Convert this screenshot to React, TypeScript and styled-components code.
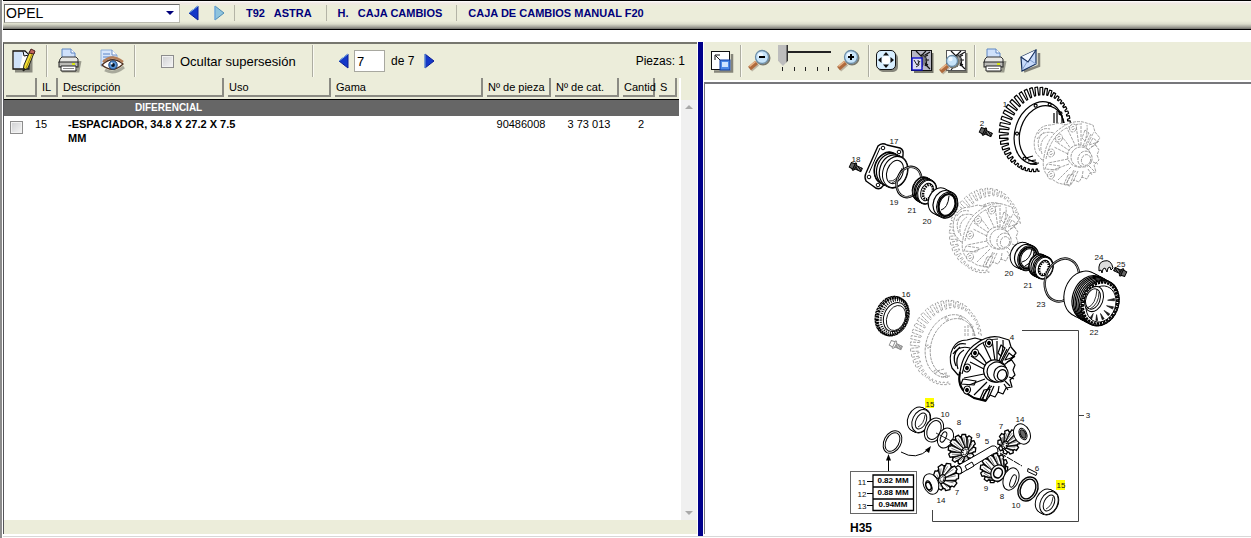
import React from "react";
import styled, { createGlobalStyle } from "styled-components";

const beige = "#ecedda";
const navy = "#00007b";

const GlobalStyle = createGlobalStyle`
  *, *::before, *::after { box-sizing: border-box; }
  body {
    margin: 0;
    background: #fff;
    color: #000;
    font-family: "Liberation Sans", Arial, sans-serif;
    font-size: 12px;
  }
  button, input, select { font: inherit; color: inherit; margin: 0; }
`;

/* ---------- page frame ---------- */

const Page = styled.div`
  min-height: 100vh;
  display: flex;
  flex-direction: column;
  border-left: 2px solid #8c8c8c;
  padding-left: 1px;
  padding-bottom: 2px;
`;

const TopBar = styled.header`
  height: 30px;
  flex: none;
  display: flex;
  align-items: center;
  margin-bottom: 12px;
  padding: 0 0 4px 1px;
  border-top: 1px solid #000;
  border-bottom: 1px solid #000;
  background: linear-gradient(#fff 0, #f0e8e4 2px, ${beige} 5px, ${beige} 20px, #dcddcc 23px, #a3a399 26px, #6f6f6a 28px);
`;

const BrandBox = styled.div`
  display: grid;
  align-items: center;
  justify-items: end;
  width: 176px;
  height: 19px;
  margin-right: 8px;
  border: 1px solid #b9b9ae;
  border-top-color: #6a6a6a;
  border-left-color: #6a6a6a;
  background: #fff;
  > * { grid-area: 1 / 1; }
  > svg { margin-right: 5px; pointer-events: none; }
`;

const BrandSelect = styled.select`
  appearance: none;
  width: 100%;
  height: 17px;
  padding: 0 0 0 1px;
  border: 0;
  background: transparent;
  font-size: 14px;
  line-height: 17px;
`;

const IconButton = styled.button<{ $w: number; $gap?: number }>`
  display: flex;
  flex: none;
  align-items: center;
  justify-content: center;
  width: ${(p) => p.$w}px;
  height: 28px;
  margin-right: ${(p) => p.$gap ?? 0}px;
  padding: 0;
  border: 0;
  background: none;
  > svg { flex: none; overflow: visible; }
`;

const Crumbs = styled.nav`
  display: flex;
  align-items: center;
`;

const Crumb = styled.a`
  padding: 0 14px 0 11px;
  border-left: 1px solid #b4b4a6;
  color: ${navy};
  font-size: 11px;
  font-weight: bold;
  line-height: 16px;
  text-decoration: none;
  white-space: pre;
`;

const Split = styled.main`
  flex: 1;
  display: grid;
  grid-template-columns: 695fr 5px 548fr;
  border-bottom: 1px solid #d8d8d8;
`;

const Divider = styled.div`
  background: #00008b;
`;

/* ---------- parts list ---------- */

const ListPane = styled.section`
  display: flex;
  flex-direction: column;
  min-width: 0;
  margin: 0 1px 2px 0;
  border-top: 2px solid #77776f;
  border-left: 1px solid #55555a;
  background: ${beige};
`;

const Toolbar = styled.div<{ $height: number; $pad: number }>`
  display: flex;
  flex: none;
  align-items: center;
  height: ${(p) => p.$height}px;
  padding-left: ${(p) => p.$pad}px;
`;

const Sep = styled.span<{ $gap: number }>`
  flex: none;
  width: 2px;
  height: 32px;
  margin-right: ${(p) => p.$gap}px;
  border-left: 1px solid #adada1;
  border-right: 1px solid #fafaf2;
`;

const Tick = styled.input`
  appearance: none;
  flex: none;
  width: 13px;
  height: 13px;
  border: 1px solid #8d8d8d;
  background: linear-gradient(135deg, #cfd0d2, #f6f6f6);
  box-shadow: inset 0 0 0 1px #f2f2f2;
`;

const TickLabel = styled.label`
  display: flex;
  align-items: center;
  gap: 6px;
  width: 151px;
  font-size: 13px;
  white-space: nowrap;
`;

const PageInput = styled.input`
  width: 31px;
  height: 22px;
  padding: 0 2px;
  border: 1px solid #a8a8a0;
  background: #fff;
  font-size: 13px;
`;

const PageCount = styled.span`
  width: 33px;
  padding-left: 6px;
  white-space: nowrap;
`;

const Pieces = styled.span`
  margin-left: auto;
  padding-right: 12px;
`;

const ListBody = styled.div`
  flex: 1;
  display: grid;
  grid-template-columns: minmax(0, 1fr) 16px;
  margin-bottom: 14px;
`;

const TableArea = styled.div`
  padding-right: 2px;
  background: #fff;
`;

const PartsTable = styled.table`
  width: 100%;
  table-layout: fixed;
  border-collapse: collapse;
  font-size: 11px;
  line-height: 14px;
`;

const HeadCell = styled.th`
  padding: 0 2px 2px;
  border-bottom: 1px solid #000;
  background: ${beige};
  font-weight: normal;
  text-align: left;
`;

const HeadBox = styled.div`
  height: 19px;
  padding: 2px 0 0 1px;
  border-right: 2px solid #8b8b83;
  border-bottom: 2px solid #8b8b83;
  white-space: nowrap;
`;

const GroupCell = styled.th`
  height: 16px;
  padding: 0 0 0 131px;
  background: #666;
  color: #fff;
  font-size: 10px;
  text-align: left;
`;

const Cell = styled.td<{ $center?: boolean; $bold?: boolean; $pad?: number }>`
  padding: 1px 0 0 ${(p) => p.$pad ?? 4}px;
  font-weight: ${(p) => (p.$bold ? "bold" : "normal")};
  text-align: ${(p) => (p.$center ? "center" : "left")};
  vertical-align: top;
  white-space: nowrap;
  > input { display: block; margin-top: 4px; }
`;

const ScrollTrack = styled.div`
  display: flex;
  flex-direction: column;
  justify-content: space-between;
  align-items: center;
  margin-top: 22px;
  padding: 5px 0;
  background: #f0f0f0;
`;

/* ---------- picture pane ---------- */

const PicturePane = styled.section`
  display: flex;
  flex-direction: column;
  min-width: 0;
  padding-bottom: 2px;
`;

const PictureTools = styled(Toolbar)`
  background: ${beige};
  margin-left: 1px;
`;

const Canvas = styled.div`
  flex: 1;
  margin: 2px 0 0 1px;
  border-top: 2px solid #77777b;
  border-left: 1px solid #77777b;
  > svg { display: block; margin: 0 auto; }
`;

const ZoomSlider = styled.div`
  width: 54px;
  height: 32px;
  margin-right: 5px;
`;

const Range = styled.input`
  appearance: none;
  display: block;
  width: 100%;
  height: 21px;
  background: linear-gradient(#222, #222) 0 6px / 53px 2px no-repeat;
  &::-webkit-slider-thumb {
    appearance: none;
    width: 10px;
    height: 21px;
    background: linear-gradient(90deg, #bdbdbd 8px, #333 9px);
    clip-path: polygon(0 0, 100% 0, 100% 75%, 50% 100%, 0 75%);
  }
`;

const Ticks = styled.div`
  display: flex;
  justify-content: space-between;
  padding: 1px 3px 0 4px;
  > i { width: 1px; height: 4px; background: #222; }
`;

/* ---------- icons ---------- */

const Arrow = ({ left, pale }: { left?: boolean; pale?: boolean }) => (
  <svg width="11" height="16" viewBox="0 0 11 16">
    <path
      d={left ? "M10 1V15L1 8Z" : "M1 1V15L10 8Z"}
      fill={pale ? "#8fc4dd" : "#1438c8"}
      stroke={pale ? "#4f8cb4" : "#0a1c96"}
    />
    <path d={left ? "M10 1L1 8" : "M1 1V15"} stroke="#7db4ec" fill="none" />
  </svg>
);

const Caret = ({ up, color, w = 8 }: { up?: boolean; color: string; w?: number }) => (
  <svg width={w} height="4" viewBox="0 0 8 4" aria-hidden="true">
    <path d={up ? "M0 4L4 0L8 4Z" : "M0 0H8L4 4Z"} fill={color} />
  </svg>
);

const EditIcon = () => (
  <svg width="26" height="26" viewBox="0 0 26 26">
    <path d="M4 23H20V8" stroke="#8b8b80" strokeWidth="3" fill="none" />
    <path d="M2 3H14L18 7V21H2Z" fill="#fff" stroke="#111" strokeWidth="1.3" />
    <path d="M3 4H12L9 20H3Z" fill="#cfe2fa" />
    <path d="M12 3L13 8L18 7" fill="#e9f2ff" stroke="#111" />
    <path d="M19 3L23 5L17 20L12 23L13 17Z" fill="#f3df38" stroke="#222" />
    <path d="M21 6L15 20" stroke="#a58b10" />
    <path d="M18 5L20 1L24 3L23 6Z" fill="#c0645c" stroke="#4a2020" />
    <path d="M12 23L13 20L15 21Z" fill="#111" />
  </svg>
);

const PrinterIcon = () => (
  <svg width="24" height="26" viewBox="0 0 24 26">
    <path d="M4 23H20L22 13" stroke="#77776c" strokeWidth="3" fill="none" opacity=".7" />
    <path d="M4 11V1H13L17 5V11Z" fill="#cfe1fb" stroke="#5f86c2" />
    <path d="M13 1V5H17" fill="#fff" stroke="#5f86c2" />
    <path d="M2 11L4 9H18L20 11V15H1Z" fill="#e8e8e4" stroke="#333" />
    <rect x="1" y="14" width="19" height="5" fill="#bcbcb8" stroke="#222" />
    <rect x="14" y="15" width="3" height="2" fill="#d8e815" />
    <path d="M3 18H18V23H3Z" fill="#fff" stroke="#222" />
    <path d="M5 20.500H16" stroke="#888" />
  </svg>
);

const PreviewIcon = () => (
  <svg width="27" height="26" viewBox="0 0 27 26">
    <path d="M2 2H13L18 7V18H2Z" fill="#d7e6fb" stroke="#8eaeda" />
    <path d="M13 2V7H18" fill="#fff" stroke="#6d8fc4" />
    <path d="M4 6H11M4 9H15M4 12H13" stroke="#5a84c6" />
    <path d="M6 22Q15 27 25 19" stroke="#8b8b80" strokeWidth="3" fill="none" opacity=".7" />
    <path d="M3 17Q13 7 24 16Q14 26 3 17Z" fill="#fff" stroke="#4d3020" strokeWidth="1.300" />
    <path d="M4 14Q13 5 24 14" stroke="#b57f58" strokeWidth="2.400" fill="none" />
    <circle cx="14" cy="17" r="4.200" fill="#5b97d8" stroke="#163b70" />
    <circle cx="14" cy="17" r="1.900" fill="#051428" />
    <circle cx="12.700" cy="15.500" r="1" fill="#fff" />
  </svg>
);

const DockIcon = () => (
  <svg width="24" height="24" viewBox="0 0 24 24">
    <path d="M4 22.500H22V5" stroke="#85857a" strokeWidth="2.500" fill="none" />
    <rect x="1.500" y="2.500" width="18" height="18" fill="#fff" stroke="#111" />
    <path d="M5 11V6H10M5.500 6.500L10 11" stroke="#111" fill="none" />
    <rect x="10" y="11" width="10" height="10" fill="#4d8ae8" stroke="#0d3ba0" />
    <rect x="12" y="13" width="6" height="5" fill="#cfe4ff" />
  </svg>
);

const Lens = ({ x, y, r }: { x: number; y: number; r: number }) => (
  <>
    <path d={`M${x - r + 2} ${y + r}L${x - r - 5} ${y + r + 6}`} stroke="#8c7a68" strokeWidth="5" opacity=".5" />
    <path d={`M${x - r + 1} ${y + r - 1}L${x - r - 6} ${y + r + 5}`} stroke="#b06a3c" strokeWidth="4.500" />
    <path d={`M${x - r} ${y + r - 2}L${x - r - 6} ${y + r + 3}`} stroke="#eab68a" strokeWidth="1.600" />
    <circle cx={x + 1} cy={y + 1} r={r} fill="none" stroke="#78786e" strokeWidth="2" />
    <circle cx={x} cy={y} r={r} fill="#c7e4fa" stroke="#6d8ea8" strokeWidth="1.300" />
    <circle cx={x - 1.500} cy={y - 2} r={r / 2.500} fill="#eef8ff" />
  </>
);

const ZoomIcon = ({ plus }: { plus?: boolean }) => (
  <svg width="24" height="24" viewBox="0 0 24 24">
    <Lens x={14} y={8} r={6.5} />
    <path d={plus ? "M11 8H17M14 5V11" : "M11 8H17"} stroke="#000" strokeWidth="2" />
  </svg>
);

const PanIcon = () => (
  <svg width="24" height="24" viewBox="0 0 24 24">
    <rect x="3" y="4" width="20" height="19" rx="5" fill="#85857a" />
    <rect x="1.500" y="1.500" width="19" height="19" rx="4.500" fill="#d8efff" stroke="#111" />
    <path d="M11 3L14 6.500H8ZM11 19L14 15.500H8ZM3 11L6.500 8V14ZM19 11L15.500 8V14Z" fill="#111" />
    <circle cx="11" cy="11" r="4" fill="#fff" />
  </svg>
);

const Sketch = () => (
  <>
    <path d="M6 2L11 7L16 2M6 21L10 16M20 20L15 15M15 6L20 3M13 6Q19 10 15 17M12 5V18M14 8L18 6M15 11H19M15 14L18 16" stroke="#111" strokeWidth="1.200" fill="none" />
    <path d="M10 8L15 5L17 12L13 17Z" fill="#555" opacity=".6" />
  </>
);

const RegionIcon = () => (
  <svg width="24" height="24" viewBox="0 0 24 24">
    <path d="M4 23H22.500V4" stroke="#77776c" strokeWidth="2" fill="none" />
    <rect x="1.500" y="1.500" width="20" height="20" fill="#b7b7c4" stroke="#111" />
    <Sketch />
    <rect x="2" y="9" width="10" height="12" fill="#dcdcf4" stroke="#1010c8" strokeWidth="1.400" />
    <path d="M4 11L7 16L10 12M6 18L9 16L8 11" stroke="#222" fill="none" />
  </svg>
);

const FindIcon = () => (
  <svg width="27" height="24" viewBox="0 0 27 24">
    <path d="M7 23H25.500V4" stroke="#77776c" strokeWidth="2" fill="none" />
    <rect x="5.500" y="1.500" width="19" height="20" fill="#fff" stroke="#555" />
    <g transform="translate(4 0)"><Sketch /></g>
    <Lens x={11} y={12} r={5.5} />
  </svg>
);

const MailIcon = () => (
  <svg width="20" height="24" viewBox="0 0 20 24">
    <path d="M4 22.500L19 17V4" stroke="#85857a" strokeWidth="2.500" fill="none" />
    <path d="M1 8L16 1V15L2 22Z" fill="#c6dafa" stroke="#16305e" strokeWidth="1.200" />
    <path d="M1 8L8 13L16 1" fill="#f4f9ff" stroke="#16305e" strokeWidth="1.200" />
    <path d="M2 21L7 13M16 15L10 11" stroke="#7f9ccc" />
  </svg>
);

/* ---------- exploded drawing ---------- */

type Oval = { cx: number; cy: number; rx: number; ry: number; rot?: number };

const at = (o: Oval, t: number, k = 0): [number, number] => {
  const a = ((o.rot ?? 20) * Math.PI) / 180;
  const x = (o.rx + k) * Math.cos(t);
  const y = (o.ry + k) * Math.sin(t);
  return [o.cx + x * Math.cos(a) - y * Math.sin(a), o.cy + x * Math.sin(a) + y * Math.cos(a)];
};

const pt = (p: [number, number]) => `${p[0].toFixed(1)} ${p[1].toFixed(1)}`;

const El = ({ cx, cy, rx, ry, rot = 20, ...rest }: Oval & React.SVGProps<SVGEllipseElement>) => (
  <ellipse cx={cx} cy={cy} rx={rx} ry={ry} transform={`rotate(${rot} ${cx} ${cy})`} {...rest} />
);

const teethPath = (o: Oval, n: number, base: number, extra: number, t0: number) => {
  const step = (Math.PI * 2) / n;
  let d = "";
  for (let i = 0; i < n; i++) {
    const t = i * step;
    const len = base + extra * Math.max(0, Math.cos(t - t0));
    d += `${i ? "L" : "M"}${pt(at(o, t))}L${pt(at(o, t + step * 0.1, len))}L${pt(at(o, t + step * 0.6, len))}L${pt(at(o, t + step * 0.7))}`;
  }
  return d + "Z";
};

const ghostInk = "#8c8c8c";

const RingGear = ({ x, y, ghost }: { x: number; y: number; ghost?: boolean }) => {
  const face: Oval = { cx: 1038, cy: 131, rx: 29, ry: 38, rot: 18 };
  return (
    <g
      transform={`translate(${x} ${y})`}
      fill="none"
      stroke={ghost ? ghostInk : "#000"}
      strokeWidth={ghost ? 0.8 : 1.2}
      strokeDasharray={ghost ? "3 1" : undefined}
      strokeLinejoin="round"
    >
      <path d={teethPath(face, 46, 2.5, 8, Math.PI * 1.1)} fill="#fff" />
      <El cx={1039} cy={132} rx={24} ry={32} rot={18} />
      <El cx={1042} cy={133} rx={22} ry={29} rot={18} />
      {[5.3, 4.7, 4.1, 2.9, 1.9].map((t) => {
        const p = at({ cx: 1040.5, cy: 132.5, rx: 23, ry: 30.5, rot: 18 }, t);
        return <circle key={t} cx={p[0]} cy={p[1]} r="1.500" />;
      })}
      <path d="M1074 122H1048V150L1034 154L1041 174L1080 185Z" fill="#fff" stroke="none" />
      <path d="M1054 122V112M1057 122V110M1062 122V114M1033 155L1026 157M1036 159L1028 160M1039 162L1030 163" />
    </g>
  );
};

const Housing = ({ x, y, ghost }: { x: number; y: number; ghost?: boolean }) => (
  <g
    transform={`translate(${x} ${y})`}
    fill="#fff"
    stroke={ghost ? ghostInk : "#000"}
    strokeWidth={ghost ? 0.8 : 1.2}
    strokeDasharray={ghost ? "3 1" : undefined}
    strokeLinejoin="round"
  >
    <path d="M958 375L952 368Q948 357 953 348Q957 340 967 340L975 338L990 342L970 372Z" />
    <path d="M954 349Q958 342 966 344M953 354Q959 345 970 348M956 366Q951 355 960 347M958 369Q954 356 964 350" fill="none" />
    <path d="M960 372Q963 352 977 343Q988 335 999 337L1009 340L1011 347L1016 353L1011 359L1015 365L1013 370L1015 375L1010 380L1012 387L1006 388L1003 394L998 392L995 397L990 395L986 401L974 398L966 393Q957 386 960 372Z" />
    <path d="M962 374Q966 354 979 345Q988 339 998 339" fill="none" />
    <g fill="none">
      <path d="M988 366Q982 356 978 352M992 362L983 343M995 361L992 340M999 361Q1004 350 1003 340M1002 362Q1007 352 1010 347M1004 365L1015 356M984 369L970 362M984 374L964 378M985 379L969 385M987 382L974 395M990 385L982 399M994 386L989 397M999 386L998 393M1004 384L1008 390M1009 377L1014 379" />
      <path d="M986 366L971 356M997 360L997 341M1007 349L1001 361M992 386Q984 391 983 399M1007 362L1012 360M1005 381L1010 386" />
      <path d="M976 381L963 379L961 384L974 385ZM984 390L980 399L986 400L990 389Z" />
      <path d="M1001 345L998 353L1001 356L1005 348ZM1009 353L1005 360L1014 357Z" />
    </g>
    {!ghost && <path d="M960 372Q957 386 966 393L974 398L986 401" fill="none" strokeWidth="2" />}
    {[[989, 343], [975, 353], [967, 368], [967, 390]].map(([cx, cy]) => (
      <g key={cy}>
        <El cx={cx} cy={cy} rx={3.4} ry={4} />
        <El cx={cx} cy={cy} rx={1.3} ry={1.6} fill={ghost ? "#fff" : "#000"} />
      </g>
    ))}
    <El cx={995} cy={371} rx={11.5} ry={11} />
    <El cx={997} cy={372} rx={10} ry={10} />
    <El cx={1001} cy={374} rx={7} ry={8} />
    <El cx={1002} cy={375} rx={4.5} ry={5.5} />
  </g>
);

/* A short tube swept from the back rim (offset dx, dy) to the front rim. */
const Tube = ({ dx, dy, inner, bands = [], ...front }: Oval & { dx: number; dy: number; inner: number; bands?: number[] }) => {
  const steps = [0, 0.2, 0.4, 0.6, 0.8, 1];
  const moved = (s: number): Oval => ({ ...front, cx: front.cx + dx * (1 - s), cy: front.cy + dy * (1 - s) });
  return (
    <g>
      {steps.map((s) => <El key={s} {...moved(s)} stroke="#000" strokeWidth={2} fill="none" />)}
      {steps.map((s) => <El key={s} {...moved(s)} fill="#fff" />)}
      {bands.map((s) => <El key={s} {...moved(s)} fill="#fff" stroke="#000" strokeWidth={1.2} />)}
      <El {...front} fill="#fff" stroke="#000" strokeWidth={1} />
      <El {...front} rx={front.rx - inner} ry={front.ry - inner} fill="#fff" stroke="#000" strokeWidth={1} />
    </g>
  );
};

const Spacer = ({ cx, cy }: { cx: number; cy: number }) => (
  <g>
    <Tube cx={cx} cy={cy} rx={8.5} ry={12} rot={25} dx={-4} dy={-2} inner={3.5} />
    <path d={`M${cx - 3} ${cy + 6}Q${cx + 3} ${cy + 3} ${cx + 4} ${cy - 6}`} fill="none" stroke="#000" strokeWidth=".8" />
  </g>
);

const Washer = ({ hole, hx = 0, hy = 0, thick = 1, ...o }: Oval & { hole: number; hx?: number; hy?: number; thick?: number }) => (
  <g fill="#fff" stroke="#000" strokeWidth={thick}>
    <El {...o} />
    <El {...o} cx={o.cx + hx} cy={o.cy + hy} rx={o.rx - hole} ry={o.ry - hole} />
  </g>
);

const Bolt = ({ x, y, flip, ghost }: { x: number; y: number; flip?: boolean; ghost?: boolean }) => (
  <g transform={`translate(${x} ${y}) rotate(${flip ? 205 : 25})`} stroke={ghost ? ghostInk : "#000"} fill="#fff" strokeWidth=".9">
    <rect x="2" y="-1.800" width="7.500" height="3.600" />
    <path d="M4 -2V2M5.500 -2V2M7 -2V2M8.500 -2V2" strokeWidth="1.100" />
    <ellipse cx="1.500" cy="0" rx="1.600" ry="4" fill={ghost ? "#fff" : "#444"} />
    <path d="M-3 -2.500L1 -3V3L-3 2.500Z" fill={ghost ? "#fff" : "#666"} />
  </g>
);

/* Conical gear: wedge teeth between the rim and an off-centre hub. */
const BevelGear = ({ cx, cy, r, hx, hy, n = 11, open }: { cx: number; cy: number; r: number; hx: number; hy: number; n?: number; open?: boolean }) => {
  const rim: Oval = { cx, cy, rx: r - 2.5, ry: r - 1, rot: 25 };
  const hub: Oval = { cx: cx + hx, cy: cy + hy, rx: r * (open ? 0.5 : 0.25), ry: r * (open ? 0.6 : 0.35), rot: 25 };
  return (
    <g fill="#fff" stroke="#000" strokeWidth=".8" strokeLinejoin="round">
      <path d={teethPath(rim, n, 2, 0, 0)} strokeWidth="1.300" />
      {Array.from({ length: n }, (_, i) => {
        const t = (i * Math.PI * 2) / n;
        return (
          <g key={i}>
            <path d={`M${pt(at(rim, t - 0.12))}L${pt(at(hub, t))}L${pt(at(rim, t))}Z`} fill="#000" />
            <path d={`M${pt(at(rim, t + 0.2, -1))}L${pt(at(hub, t + 0.1))}`} strokeWidth=".5" />
          </g>
        );
      })}
      <El {...hub} strokeWidth={1.2} />
      <El {...hub} rx={hub.rx * 0.6} ry={hub.ry * 0.6} strokeWidth={1.6} strokeDasharray={open ? undefined : "1 1"} />
    </g>
  );
};

const helical: Oval = { cx: 893, cy: 316.5, rx: 14, ry: 18.5, rot: 22 };
const drum: Oval = { cx: 1100, cy: 303, rx: 17, ry: 21.5, rot: 20 };

const labels: [string, number, number][] = [
  ["1", 1005, 107], ["2", 982, 126], ["17", 894, 144], ["18", 856, 162], ["19", 894, 205],
  ["21", 912, 213], ["20", 927, 224], ["20", 1009, 276], ["21", 1028, 288], ["23", 1041, 307],
  ["24", 1099, 260], ["25", 1121, 267], ["22", 1094, 335], ["16", 906, 297], ["4", 1012, 340],
  ["3", 1088, 418], ["15", 930, 407], ["10", 945, 417], ["8", 959, 425], ["9", 978, 438],
  ["5", 987, 444], ["7", 1001, 429], ["14", 1020, 422], ["6", 1037, 471], ["15", 1061, 488],
  ["9", 986, 491], ["8", 1002, 499], ["10", 1016, 508], ["7", 957, 495], ["14", 941, 503],
  ["11", 862, 485], ["12", 862, 497], ["13", 862, 509],
];

const Drawing = () => (
  <svg width="301" height="450" viewBox="828 84 301 450" role="img" aria-label="Diferencial" fontFamily="'Liberation Sans', Arial, sans-serif">
    <RingGear x={0} y={1} />
    <Housing x={84} y={-215} ghost />
    <Bolt x={983} y={131} />

    <RingGear x={-50} y={102} ghost />
    <Housing x={3} y={-133} ghost />
    <RingGear x={-89} y={214} ghost />
    <Housing x={0} y={0} />
    <Bolt x={893} y={344} ghost />

    <g fill="#fff" stroke="#000" strokeLinejoin="round">
      <path d="M866 173L878 146Q882 142 887 145L900 148Q904 150 903 155L902 165L881 188Q877 190 873 186L866 181Q864 177 866 173Z" strokeWidth="1.400" />
      <path d="M869 173L880 148" />
      <circle cx="883" cy="148" r="1.800" />
      <circle cx="899" cy="152" r="1.800" />
      <circle cx="869" cy="177" r="1.800" />
      <circle cx="878" cy="185" r="1.800" />
    </g>
    <Tube cx={895} cy={172} rx={12} ry={16} dx={-8} dy={-4} inner={4} bands={[0, 0.25, 0.6]} />
    <path d="M889 181Q897 182 901 170M892 183Q900 180 902 168" fill="none" stroke="#000" strokeWidth=".8" />
    <Bolt x={853} y={166} />
    <El cx={909} cy={182} rx={12} ry={15.5} fill="none" stroke="#000" strokeWidth="2.400" />
    <El cx={909} cy={182} rx={12} ry={15.5} fill="none" stroke="#fff" strokeWidth=".6" />
    <Tube cx={927} cy={192} rx={9} ry={12} dx={-5} dy={-3} inner={3} bands={[0, 0.3, 0.5, 0.8]} />
    <El cx={928} cy={192} rx={4.5} ry={7.5} fill="none" stroke="#000" strokeWidth="2.500" strokeDasharray="1.500 1" />
    <Tube cx={947} cy={205} rx={10} ry={13} dx={-8} dy={-4} inner={2.5} bands={[0.55]} />
    <El cx={947} cy={205} rx={8.5} ry={11.5} fill="none" stroke="#000" strokeWidth="1.800" />
    <path d="M941 210Q948 208 949 196" stroke="#000" fill="none" />

    <Tube cx={1028} cy={258} rx={10} ry={12.5} dx={-7} dy={-3} inner={3} bands={[0.55]} />
    <El cx={1028} cy={258} rx={8.5} ry={11} fill="none" stroke="#000" strokeWidth="1.800" />
    <path d="M1022 262Q1030 260 1032 249M1025 266Q1033 262 1034 252" stroke="#000" fill="none" />
    <Tube cx={1044} cy={268} rx={8.5} ry={11} dx={-6} dy={-3} inner={3} bands={[0, 0.3, 0.6, 0.8]} />
    <El cx={1044} cy={268} rx={4.5} ry={7} fill="none" stroke="#000" strokeWidth="2.500" strokeDasharray="1.500 1" />
    <El cx={1062} cy={280} rx={16.5} ry={22} fill="none" stroke="#000" strokeWidth="2.400" />
    <El cx={1062} cy={280} rx={16.5} ry={22} fill="none" stroke="#fff" strokeWidth=".6" />

    <Tube {...drum} rx={18} ry={23} dx={-17} dy={-9} inner={2} bands={[0.45, 0.54, 0.63, 0.72, 0.81, 0.9]} />
    <path d={teethPath({ ...drum, rx: 16, ry: 20.5 }, 34, 2.5, 0, 0)} fill="#fff" stroke="#000" strokeWidth="1.300" />
    <El cx={1101} cy={304} rx={14.5} ry={18.5} fill="#fff" stroke="#000" strokeWidth=".9" />
    {[0, 0.45, 0.9, 1.35, 1.8, 5.8].map((t) => (
      <path
        key={t}
        d={`M${pt(at({ ...drum, rx: 14, ry: 18 }, t - 0.06))}L${pt(at({ ...drum, cx: 1099, rx: 8, ry: 12 }, t))}L${pt(at({ ...drum, rx: 14, ry: 18 }, t + 0.08))}Z`}
        fill="#222"
        stroke="#000"
        strokeWidth=".6"
      />
    ))}
    <El cx={1094} cy={299} rx={9} ry={13} fill="#fff" stroke="#000" />
    <El cx={1093} cy={299} rx={7} ry={10.5} fill="#fff" stroke="#000" />
    <path d="M1087 308Q1096 305 1097 289M1090 309Q1099 304 1099 292" stroke="#000" fill="none" strokeWidth=".8" />

    <path d="M1099 271Q1098 262 1104 261Q1111 259 1113 268L1111 270L1110 267L1108 268L1107 272L1105 268L1103 269L1102 273L1101 270Z" fill="#ddd" stroke="#000" />
    <Bolt x={1123} y={273} flip />

    <path d={teethPath(helical, 40, 1.5, 2, Math.PI)} fill="#fff" stroke="#000" strokeWidth="1.100" />
    <El {...helical} cx={894} rx={12.5} ry={17} fill="#fff" stroke="#000" strokeWidth="2.400" strokeDasharray="1 1.200" />
    <El {...helical} cx={895} cy={317} rx={11} ry={15} fill="#fff" stroke="#000" />
    <El {...helical} cx={896} cy={318} rx={9} ry={13} fill="#fff" stroke="#000" strokeWidth=".8" />

    <path d="M1022 330.500H1078.500V521.500H932.500V510M1078.500 415.500H1084" fill="none" stroke="#444" />

    <Spacer cx={921} cy={421} />
    <Washer cx={934} cy={430} rx={9} ry={12.5} rot={25} hole={2.5} />
    <Washer cx={945.5} cy={438} rx={7.5} ry={10.5} rot={25} hole={5} hx={-2} hy={-1} />
    <path d="M936 433L953 442" stroke="#000" strokeWidth=".8" />
    <BevelGear cx={962} cy={449} r={14} hx={3} hy={3} n={12} />
    <BevelGear cx={994} cy={468} r={14} hx={4} hy={5} n={12} open />
    <path d="M957 466L992 446Q998 445 998 452L993 454L960 474Z" fill="#fff" stroke="#000" />
    <path d="M965 466L972 462L974 466L967 470Z" fill="#fff" stroke="#000" />
    <El cx={958.5} cy={470} rx={3} ry={4} rot={-20} fill="#fff" stroke="#000" />
    <path d="M1000 453L1022 466" stroke="#000" strokeDasharray="7 1" />
    <BevelGear cx={1009} cy={442} r={11.5} hx={-4} hy={3} n={10} />
    <Washer cx={1022} cy={434} rx={8} ry={10.5} rot={-25} hole={4.5} hx={1} />
    <El cx={1023} cy={434} rx={2.5} ry={4.5} rot={-25} fill="#666" stroke="#000" />
    <BevelGear cx={946} cy={477} r={13} hx={-4} hy={2} n={9} />
    <Washer cx={931} cy={484} rx={7.5} ry={10.5} rot={-20} hole={5} hx={-2} hy={2} />
    <El cx={928.5} cy={486} rx={2.5} ry={4} rot={-20} fill="#fff" stroke="#000" strokeWidth="1.500" />
    <Washer cx={1011} cy={479} rx={7.5} ry={11.5} hole={5} hx={2} hy={2} />
    <Washer cx={1028} cy={489} rx={9.5} ry={12.5} rot={25} hole={2.2} thick={1.4} />
    <Spacer cx={1049} cy={503} />
    <path d="M1028 468.500L1037 473L1036 475.500L1027.500 471.500Z" fill="#fff" stroke="#000" />

    <Washer cx={892.5} cy={442} rx={8.5} ry={12} rot={28} hole={2} />
    <path d="M901 452Q916 461 929 449" fill="none" stroke="#000" />
    <path d="M931 446L925 450L929 453Z" />
    <path d="M888.500 472V458" stroke="#000" />
    <path d="M888.500 454L886 460.500H891Z" />

    <rect x="850.500" y="471.500" width="66" height="42" fill="#fff" stroke="#666" />
    <path d="M873 475H913.500V510.500H873ZM873 487H913M873 499H913" fill="none" stroke="#000" strokeWidth="1.300" />
    <path d="M867 481.500H873M867 493.500H873M867 505.500H873" stroke="#000" />

    <rect x="925" y="398" width="9" height="10" fill="#ff0" />
    <rect x="1056" y="480" width="9" height="10" fill="#ff0" />

    <g fontSize="8" textAnchor="middle" fill="#111">
      {labels.map(([n, x, y]) => <text key={`${n}-${x}`} x={x} y={y}>{n}</text>)}
    </g>
    <g fontSize="8" fontWeight="bold" textAnchor="middle">
      <text x="893" y="483">0.82 MM</text>
      <text x="893" y="495">0.88 MM</text>
      <text x="893" y="507">0.94MM</text>
    </g>
    <text x="850" y="532" fontSize="12" fontWeight="bold">H35</text>
  </svg>
);

/* ---------- data ---------- */

const crumbs = ["T92   ASTRA", "H.   CAJA CAMBIOS", "CAJA DE CAMBIOS MANUAL F20"];
const columns = ["", "IL", "Descripción", "Uso", "Gama", "Nº de pieza", "Nº de cat.", "Cantid", "S"];
const columnWidths = [27, 8, 21, 166, 107, 0, 68, 68, 36, 22];

export default function App() {
  return (
    <Page>
      <GlobalStyle />
      <TopBar>
        <BrandBox>
          <BrandSelect aria-label="Marca" defaultValue="OPEL">
            <option>OPEL</option>
          </BrandSelect>
          <Caret color={navy} />
        </BrandBox>
        <IconButton $w={11} $gap={15} aria-label="Anterior"><Arrow left /></IconButton>
        <IconButton $w={11} $gap={9} aria-label="Siguiente"><Arrow pale /></IconButton>
        <Crumbs>
          {crumbs.map((c) => <Crumb key={c} href="#">{c}</Crumb>)}
        </Crumbs>
      </TopBar>

      <Split>
        <ListPane>
          <Toolbar $height={34} $pad={7}>
            <IconButton $w={26} $gap={9} aria-label="Editar"><EditIcon /></IconButton>
            <Sep $gap={10} />
            <IconButton $w={24} $gap={17} aria-label="Imprimir"><PrinterIcon /></IconButton>
            <IconButton $w={27} $gap={8} aria-label="Vista previa"><PreviewIcon /></IconButton>
            <Sep $gap={25} />
            <TickLabel>
              <Tick type="checkbox" />
              Ocultar supersesión
            </TickLabel>
            <Sep $gap={24} />
            <IconButton $w={11} $gap={5} aria-label="Página anterior"><Arrow left /></IconButton>
            <PageInput aria-label="Página" defaultValue="7" />
            <PageCount>de 7</PageCount>
            <IconButton $w={22} aria-label="Página siguiente"><Arrow /></IconButton>
            <Pieces>Piezas: 1</Pieces>
          </Toolbar>
          <ListBody>
            <TableArea>
              <PartsTable>
                <colgroup>
                  {columnWidths.map((w, i) => <col key={i} width={w || undefined} />)}
                </colgroup>
                <thead>
                  <tr>
                    {columns.map((c, i) => (
                      <HeadCell key={i} colSpan={i === 0 ? 2 : 1}><HeadBox>{c}</HeadBox></HeadCell>
                    ))}
                  </tr>
                </thead>
                <tbody>
                  <tr><GroupCell colSpan={10}>DIFERENCIAL</GroupCell></tr>
                  <tr>
                    <Cell $pad={6}><Tick type="checkbox" aria-label="Seleccionar pieza 15" /></Cell>
                    <Cell colSpan={2}>15</Cell>
                    <Cell $bold $pad={8}>-ESPACIADOR, 34.8 X 27.2 X 7.5<br />MM</Cell>
                    <Cell />
                    <Cell />
                    <Cell $center>90486008</Cell>
                    <Cell $center>3 73 013</Cell>
                    <Cell $center>2</Cell>
                    <Cell />
                  </tr>
                </tbody>
              </PartsTable>
            </TableArea>
            <ScrollTrack>
              <Caret up color="#a9a9a9" />
              <Caret color="#a9a9a9" />
            </ScrollTrack>
          </ListBody>
        </ListPane>

        <Divider />

        <PicturePane>
          <PictureTools $height={38} $pad={6}>
            <IconButton $w={24} $gap={6} aria-label="Desacoplar"><DockIcon /></IconButton>
            <Sep $gap={6} />
            <IconButton $w={24} $gap={6} aria-label="Alejar"><ZoomIcon /></IconButton>
            <ZoomSlider>
              <Range type="range" min="0" max="4" defaultValue="0" aria-label="Zoom" />
              <Ticks><i /><i /><i /><i /><i /></Ticks>
            </ZoomSlider>
            <IconButton $w={24} $gap={7} aria-label="Acercar"><ZoomIcon plus /></IconButton>
            <Sep $gap={5} />
            <IconButton $w={24} $gap={11} aria-label="Ajustar"><PanIcon /></IconButton>
            <IconButton $w={24} $gap={7} aria-label="Región"><RegionIcon /></IconButton>
            <IconButton $w={27} $gap={6} aria-label="Buscar"><FindIcon /></IconButton>
            <Sep $gap={7} />
            <IconButton $w={24} $gap={13} aria-label="Imprimir imagen"><PrinterIcon /></IconButton>
            <IconButton $w={20} aria-label="Enviar"><MailIcon /></IconButton>
          </PictureTools>
          <Canvas><Drawing /></Canvas>
        </PicturePane>
      </Split>
    </Page>
  );
}
